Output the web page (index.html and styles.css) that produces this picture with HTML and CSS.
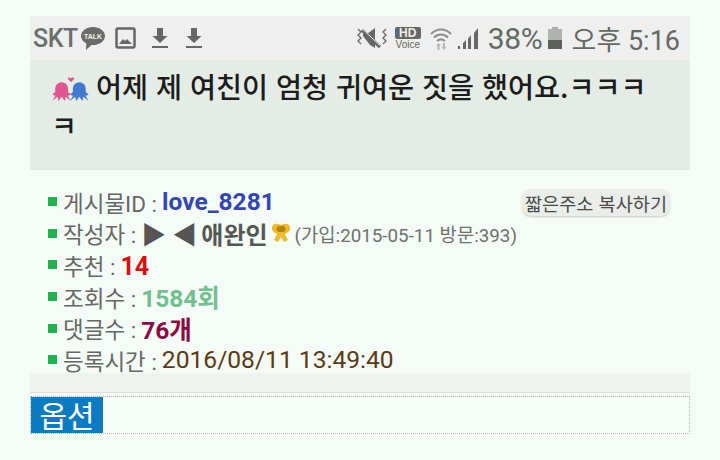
FILE: index.html
```html
<!DOCTYPE html>
<html lang="ko">
<head>
<meta charset="utf-8">
<title>게시물</title>
<link rel="stylesheet" href="styles.css">
</head>
<body>
<div class="page">
  <header class="status">
    <div class="status-left">
      <span class="carrier">SKT</span>
      <svg class="ic-talk" width="26" height="25" viewBox="0 0 25 25"><path d="M12.5 1C5.800 1 .5 5 .5 10c0 3.200 2.200 5.800 5.300 7.200L5.500 24l5.500-5c.5 0 1 .1 1.500.1C19 19 24.500 15 24.500 10 24.500 5 19.200 1 12.500 1z" fill="#6a6c69"/><text x="12.500" y="12.500" class="talk-text" text-anchor="middle">TALK</text></svg>
      <svg class="ic" width="22" height="22" viewBox="0 0 22 22"><rect x="1.500" y="1.500" width="18" height="19" rx="1.500" fill="none" stroke="#666865" stroke-width="2.500"/><path d="M4 17l4-5 2 2 2-2 5 5z" fill="#666865"/></svg>
      <svg class="ic ic-dl" width="18" height="22" viewBox="0 0 18 22"><path d="M6 1h6v8h4.500L9 16 1.500 9H6z" fill="#666865"/><rect x="1" y="19" width="16" height="2" fill="#666865"/></svg>
      <svg class="ic" width="18" height="22" viewBox="0 0 18 22"><path d="M6 1h6v8h4.500L9 16 1.500 9H6z" fill="#666865"/><rect x="1" y="19" width="16" height="2" fill="#666865"/></svg>
    </div>
    <div class="status-right">
      <svg width="34" height="24" viewBox="0 0 34 24"><path d="M3 3l3 3-3 3 3 3-3 3 3 3M31 3l-3 3 3 3-3 3 3 3-3 3" fill="none" stroke="#666865" stroke-width="1.300"/><path d="M8 8h4l8-6v20l-5-3-7-9z" fill="#666865"/><path d="M7 4l18 17" stroke="#666865" stroke-width="3.500"/><path d="M7 2.500l18 17" stroke="#efefef" stroke-width="1"/></svg>
      <div class="hd"><span class="hd-badge">HD</span><span class="hd-voice">Voice</span></div>
      <svg width="24" height="26" viewBox="0 0 24 26"><path d="M2 9c6-6 14-6 20 0M5 12.500c4-4 10-4 14 0M8 16c2.500-2 5.500-2 8 0" fill="none" stroke="#8d8f8c" stroke-width="2"/><path d="M8.500 25v-4H7l2.500-3 2.500 3h-1.500v4zM14 18v4h-1.500l2.500 3 2.500-3H16v-4z" fill="#b5b7b4"/></svg>
      <svg width="24" height="24" viewBox="0 0 24 24"><rect x="1" y="20" width="2" height="3" fill="#666865"/><path d="M6 17l3-3v9H6zM11 13l3-4v14h-3zM17 7l4-5v21h-4z" fill="#666865"/></svg>
      <span class="pct">38%</span>
      <svg width="16" height="24" viewBox="0 0 16 24"><rect x="5" y="1" width="6" height="3" fill="#aaa"/><rect x="1" y="3" width="14" height="11" fill="#b0b2af"/><rect x="1" y="14" width="14" height="9" fill="#5e605d"/></svg>
      <span class="time">오후 5:16</span>
    </div>
  </header>

  <section class="title-box">
    <h1 class="title"><svg class="couple" width="40" height="27" viewBox="0 0 38 26"><path d="M1 24l3-5-3-1 3-3c-1-4 1-9 6-9s7 5 6 9l3 3-3 1 3 5-5-4-1 4-3-4-3 4-1-4z" fill="#e0568f"/><path d="M18 24l3-5-3-1 3-3c-1-4 1-9 6-9s7 5 6 9l3 3-3 1 3 5-5-4-1 4-3-4-3 4-1-4z" fill="#4278cf"/><path d="M19 6l-3-3c0-2 2.500-2 3-.5.500-1.500 3-1.500 3 .5z" fill="#e0568f"/></svg><span class="title-text">어제 제 여친이 엄청 귀여운 짓을 했어요.ㅋㅋㅋㅋ</span></h1>
  </section>

  <section class="info">
    <button class="copy" type="button">짧은주소 복사하기</button>
    <ul class="rows">
      <li class="row"><span class="key">게시물ID :</span> <b class="v-id">love_8281</b></li>
      <li class="row"><span class="key">작성자 :</span> <span class="tri">▶ ◀</span><b class="v-name">애완인</b><svg class="ribbon" width="20" height="22" viewBox="0 0 20 22"><path d="M1 5c1-4 5-4 9-2 4-2 8-2 9 2 1 4-3 6-5 7l3 6-4 2-3-5-3 5-4-2 3-6C4 11 0 9 1 5z" fill="#eebb2e"/><path d="M7 4h6l2 3-2 3H7L5 7z" fill="#b8860f"/></svg> <span class="meta">(가입:2015-05-11 방문:393)</span></li>
      <li class="row"><span class="key">추천 :</span> <b class="v-rec">14</b></li>
      <li class="row"><span class="key">조회수 :</span> <b class="v-view">1584회</b></li>
      <li class="row"><span class="key">댓글수 :</span> <b class="v-cmt">76개</b></li>
      <li class="row"><span class="key">등록시간 :</span> <span class="v-date">2016/08/11 13:49:40</span></li>
    </ul>
  </section>

  <div class="band"></div>

  <section class="options"><span class="opt-label">옵션</span></section>
</div>
</body>
</html>
```
FILE: styles.css
```css
* { box-sizing: border-box; }
html, body { margin: 0; height: 460px; overflow: hidden; }
body {
  background: #f5fcf7;
  font-family: "Roboto", "Noto Sans CJK KR", sans-serif;
}
.page { width: 660px; margin: 0 0 0 30px; padding-top: 16px; }

.status {
  height: 44px;
  background: #efefef;
  display: flex;
  justify-content: space-between;
  align-items: center;
  padding: 0 10px 0 3px;
  color: #666865;
}
.status-left, .status-right { display: flex; align-items: center; }
.carrier { font-size: 25px; width: 47px; letter-spacing: -0.5px; font-weight: 500; color: #6d6f6c; }
.ic-talk { margin-right: 9px; }
.talk-text { font: 700 7px "Liberation Sans", sans-serif; fill: #efefef; }
.ic { margin-right: 14px; }
.ic-dl { margin-right: 16px; }
.status-right { gap: 4px; }
.hd { display: flex; flex-direction: column; align-items: center; margin: 0 4px 0 2px; }
.hd-badge {
  background: #666865; color: #efefef; font: 700 12px/12px "Liberation Sans", sans-serif;
  width: 26px; text-align: center; border-radius: 2px;
}
.hd-voice { font: 10px/11px "Liberation Sans", sans-serif; }
.pct { font-size: 30px; margin-left: 3px; letter-spacing: -0.3px; }
.time { font-size: 27px; margin-left: 5px; white-space: nowrap; font-family: "Roboto", "Noto Sans CJK KR", sans-serif; }

.title-box {
  height: 110px;
  background: #e5ece6;
  border-bottom: 1px solid #dfe5df;
  padding: 6px 40px 0 21px;
}
.title {
  margin: 0;
  font: 500 28.3px/39px "Noto Sans CJK KR", sans-serif;
  color: #1c1c1c;
  word-break: break-all;
}
.couple { vertical-align: -5px; margin-right: 5px; }

.info { position: relative; padding: 16px 0 0 18px; height: 203px; }
.copy {
  position: absolute; right: 20px; top: 19px;
  height: 27px; padding: 0 3px; border: 0; border-radius: 9px;
  background: #ebedea; box-shadow: 0 1px 2px #c9cbc8;
  font: 18.6px "Noto Sans CJK KR", sans-serif; color: #4a4a4a; white-space: nowrap;
}
.rows { list-style: none; margin: 0; padding: 0; }
.row {
  height: 31.6px; display: flex; align-items: center; gap: 5px;
  font-size: 22px; white-space: nowrap;
}
.row::before { content: ""; width: 9px; height: 9px; background: #22b14c; margin-right: 1px; }
.key { color: #666865; font-size: 22.5px; }
.v-id { color: #3546b4; font-size: 24.5px; }
.tri { color: #555; font-size: 25px; }
.v-name { color: #555754; font-size: 24px; margin-left: -1px; }
.ribbon { margin-left: -2px; }
.meta { color: #6f716e; font-size: 18.8px; margin-left: -1px; }
.v-rec { color: #d80f0f; font-size: 25px; padding-top: 3px; }
.v-view { color: #72c08f; font-size: 24.5px; }
.v-cmt { color: #8a0b41; font-size: 24.5px; }
.v-date { color: #5a3a14; font-size: 24.6px; }

.band {
  height: 20px; background: #eff2ee;
  border-bottom: 1px solid #dcdfdb;
}
.options {
  height: 38px; margin-top: 3px;
  border: 1px dotted #b4b6b3;
}
.opt-label {
  display: block; width: 72px; height: 36px;
  background: #0b7bc0; color: #fff;
  font: 400 30px/34px "Noto Sans CJK KR", sans-serif; text-align: center;
}
```
